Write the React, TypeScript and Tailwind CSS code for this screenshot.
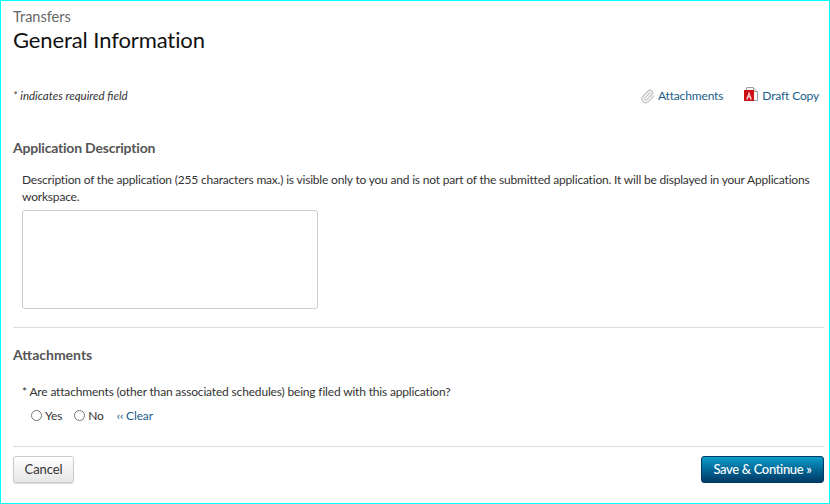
import { Paperclip } from 'lucide-react'

function PdfIcon() {
  return (
    <svg width="14" height="15" viewBox="0 0 14 15" className="shrink-0">
      <path d="M2.5 0.5H9.5L13.5 4.5V13.5H2.5Z" fill="#f7f7f7" stroke="#a0a0a0" />
      <path d="M9.5 0.5V4.5H13.5" fill="#e8e8e8" stroke="#a0a0a0" />
      <rect x="0" y="3" width="10" height="11" fill="#cc1016" />
      <path d="M5 4.6L2.2 12.4H3.7L4.3 10.6H5.8L6.4 12.4H7.9Z M5 7.6L5.4 9.3H4.6Z" fill="#fbdcdc" fillRule="evenodd" />
    </svg>
  )
}

function Radio({ label }: { label: string }) {
  return (
    <label className="flex items-center">
      <span className="w-[11px] h-[11px] rounded-full border border-[#767676] bg-white mr-[3px]" />
      <span>{label}</span>
    </label>
  )
}

export default function App() {
  return (
    <div className="w-[830px] h-[504px] bg-white border border-[#00ffff] pl-[12px] pr-[5px] font-['Lato',sans-serif] text-[12px] tracking-[-0.15px] text-[#333] flex flex-col overflow-hidden">
      <div className="pt-[8px] text-[14.5px] leading-[16px] tracking-[0px] text-[#666]">Transfers</div>
      <h1 className="text-[22px] leading-[30px] tracking-[-0.1px] text-[#111] font-normal">General Information</h1>

      <div className="flex items-center justify-between mt-[31px] h-[20px] pr-[5px]">
        <div className="italic text-[11.5px] text-[#333] tracking-[0px]">* indicates required field</div>
        <div className="flex items-center text-[#215d8a]">
          <a className="flex items-center gap-[3px]">
            <Paperclip size={15} strokeWidth={2.2} className="text-[#c6c6c6]" />
            <span>Attachments</span>
          </a>
          <a className="flex items-center gap-[4px] ml-[21px] -mt-[3px]">
            <PdfIcon />
            <span className="mt-[3px]">Draft Copy</span>
          </a>
        </div>
      </div>

      <h2 className="mt-[32px] text-[14px] leading-[20px] tracking-[-0.2px] font-bold text-[#555]">Application Description</h2>
      <div className="pl-[9px] pr-[8px] mt-[13px]">
        <p className="leading-[17px] tracking-[-0.19px]">
          Description of the application (255 characters max.) is visible only to you and is not part of the submitted application. It will be displayed in your Applications workspace.
        </p>
        <textarea className="block w-[296px] h-[99px] mt-[5px] rounded-[3px] border border-[#ccc] bg-white resize-none" />
      </div>

      <hr className="border-0 border-t border-[#ddd] mt-[18px]" />

      <h2 className="mt-[17px] text-[14px] leading-[20px] tracking-[0px] font-bold text-[#555]">Attachments</h2>
      <div className="pl-[9px] mt-[18px] leading-[17px] tracking-[-0.17px]">* Are attachments (other than associated schedules) being filed with this application?</div>
      <div className="flex items-center pl-[18px] mt-[7px] leading-[17px]">
        <Radio label="Yes" />
        <span className="w-[12px]" />
        <Radio label="No" />
        <a className="ml-[13px] text-[#215d8a]">‹‹ Clear</a>
      </div>

      <hr className="border-0 border-t border-[#ddd] mt-[22px]" />

      <div className="flex items-center justify-between mt-[9px]">
        <button className="w-[61px] h-[27px] rounded-[3px] border border-[#ccc] bg-gradient-to-b from-white to-[#e6e6e6] text-[#333] shadow-[0_1px_1px_rgba(0,0,0,0.15)] text-[13px] tracking-[-0.1px]">Cancel</button>
        <button className="w-[123px] h-[27px] rounded-[3px] border border-[#003a66] bg-gradient-to-b from-[#0d9ccb] to-[#003a66] text-white font-medium text-[13px] tracking-[-0.35px]">Save &amp; Continue »</button>
      </div>
    </div>
  )
}
